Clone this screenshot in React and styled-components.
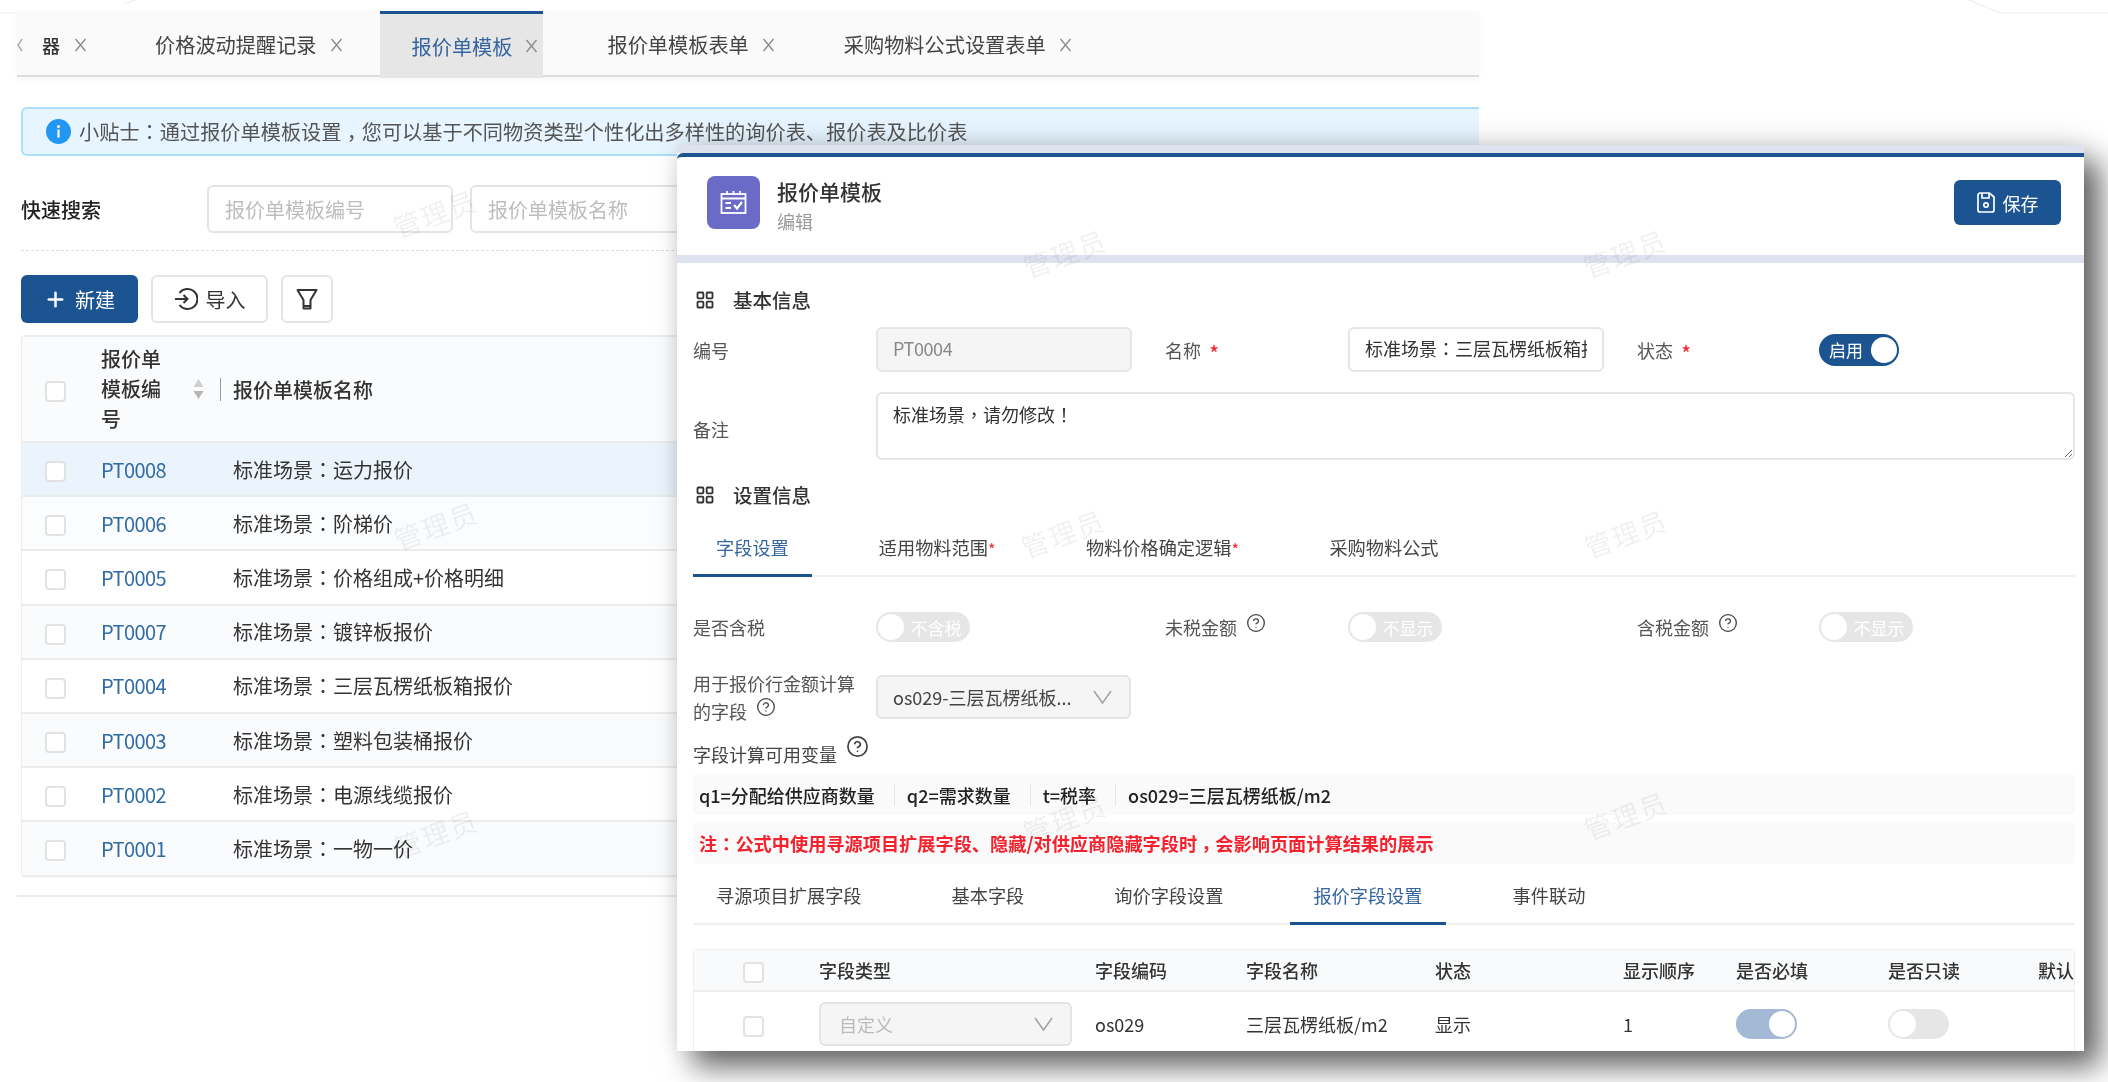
import React from "react";
import styled, { createGlobalStyle } from "styled-components";
import { CircleHelp, LayoutGrid, Plus } from "lucide-react";

const BLUE = "#1c5492";

const GlobalStyle = createGlobalStyle`
  html, body {
    margin: 0;
    padding: 0;
    background: #fff;
  }
  body {
    font-family: "Noto Sans CJK SC", "Liberation Sans", sans-serif;
    color: #333;
  }
  * {
    box-sizing: border-box;
  }
`;

const Page = styled.div`
  position: relative;
  width: 2108px;
  height: 1082px;
  overflow: hidden;
  background: #fff;
  filter: blur(0.35px);
`;

const Decoration = styled.svg`
  position: absolute;
  top: 0;
  left: 0;
`;

// the reference centres full-width punctuation in its cell
const Punct = styled.span`
  font-family: "Noto Sans CJK TC", sans-serif;
`;

const Comma = styled(Punct)`
  display: inline-block;
  transform: translateY(0.28em);
`;

const ListPanel = styled.section`
  width: 1462px;
  margin-left: 17px;
  padding-top: 11px;
`;

const TabBar = styled.div`
  display: flex;
  height: 66px;
  background: #fafafa;
  border-bottom: 2px solid #dcdcdc;
  box-shadow: 0 3px 6px rgba(0, 0, 0, 0.03);
  font-size: 20.2px;
  color: #444;
`;

const Tab = styled.div`
  display: flex;
  align-items: center;
  gap: 13px;
  height: ${(p) => (p.$active ? "67px" : "64px")};
  padding: 0 5px 0 32px;
  margin-right: 32px;
  background: ${(p) => (p.$active ? "#e6e6e6" : "transparent")};
  border-top: 3px solid ${(p) => (p.$active ? BLUE : "transparent")};
  color: ${(p) => (p.$active ? "#34659f" : "inherit")};
`;

const ClippedTab = styled(Tab)`
  gap: 12px;
  padding: 0 5px 0 0;
  margin-right: 31px;
`;

const ScrollArrow = styled.svg`
  width: 25px;
  margin-right: -12px;
  flex-shrink: 0;
`;

const ClippedLabel = styled.span`
  width: 20px;
  font-size: 18px;
  font-weight: 500;
  color: #333;
`;

const CloseIcon = styled.svg`
  width: 13px;
  height: 14px;
  flex-shrink: 0;
`;

const PanelBody = styled.div`
  padding-left: 4px;
`;

const Tip = styled.div`
  display: flex;
  align-items: center;
  gap: 8px;
  height: 49px;
  margin-top: 30px;
  padding-left: 23px;
  background: #e6f5ff;
  border: 2px solid #abdffc;
  border-right: none;
  border-radius: 6px 0 0 6px;
  font-size: 20.2px;
  color: #555;
`;

const SearchRow = styled.div`
  display: flex;
  align-items: center;
  gap: 17px;
  margin-top: 29px;
  padding-bottom: 17px;
  border-bottom: 1px dashed #ddd;
`;

const SearchLabel = styled.span`
  width: 169px;
  font-size: 20px;
  font-weight: 500;
  color: #222;
`;

const SearchInput = styled.input`
  width: 246px;
  height: 48px;
  padding: 0 16px;
  border: 2px solid #e4e4e4;
  border-radius: 6px;
  background: transparent;
  outline: none;
  font: inherit;
  font-size: 20px;
  &::placeholder {
    color: #bdbdbd;
  }
`;

const Toolbar = styled.div`
  display: flex;
  gap: 13px;
  margin-top: 24px;
`;

const ToolButton = styled.button`
  display: flex;
  align-items: center;
  justify-content: center;
  gap: 8px;
  width: ${(p) => p.$width || "117px"};
  height: 48px;
  padding: 0;
  border-radius: 6px;
  border: ${(p) => (p.$primary ? "none" : "2px solid #e4e4e4")};
  background: ${(p) => (p.$primary ? BLUE : "#fff")};
  color: ${(p) => (p.$primary ? "#fff" : "#333")};
  font: inherit;
  font-size: 20px;
`;

const TableWrap = styled.div`
  margin-top: 12px;
  border-left: 1px solid #ececec;
  border-top: 2px solid #eee;
  border-radius: 4px 0 0 4px;
  box-shadow: 0 1px 2px rgba(0, 0, 0, 0.04);
`;

const ListRow = styled.div`
  display: grid;
  grid-template-columns: 79px 132px 1fr;
  align-items: center;
  height: ${(p) => (p.$head ? "106px" : "54.2px")};
  background: ${(p) => p.$bg || "#fff"};
  border-bottom: 2px solid #ececec;
  font-size: 20px;
`;

const Check = styled.span`
  display: block;
  width: 21px;
  height: 21px;
  margin-top: 5px;
  margin-left: ${(p) => p.$offset || "23px"};
  background: #fff;
  border: 2px solid #e2e2e2;
  border-radius: 4px;
`;

const CodeHead = styled.div`
  display: flex;
  align-items: center;
`;

const HeadLabel = styled.span`
  width: 60px;
  line-height: 30px;
  font-weight: 500;
  color: #333;
`;

const SortIcon = styled.svg`
  margin-left: 32px;
`;

const HeadDivider = styled.span`
  width: 1px;
  height: 23px;
  margin-left: 16px;
  background: #999;
`;

const HeadName = styled.span`
  font-weight: 500;
  color: #333;
`;

const CodeLink = styled.a`
  letter-spacing: -0.6px;
  color: #2f6ba5;
`;

const ListFoot = styled.div`
  height: 2px;
  margin: 18px 0 0 -4px;
  background: #ececec;
`;

const Modal = styled.section`
  position: absolute;
  left: 677px;
  top: 145px;
  width: 1407px;
  height: 906px;
  overflow: hidden;
  background: #fff;
  box-shadow: 0 -6px 24px rgba(0, 0, 0, 0.09), 16px 16px 28px rgba(0, 0, 0, 0.6);
`;

const ModalBand = styled.div`
  height: 8px;
  background: #dde2ee;
`;

const ModalHead = styled.header`
  display: flex;
  align-items: flex-start;
  height: 102px;
  padding: 19px 23px 0 30px;
  border-top: 4px solid ${BLUE};
  border-top-left-radius: 6px;
`;

const AppIcon = styled.div`
  display: flex;
  align-items: center;
  justify-content: center;
  width: 53px;
  height: 53px;
  border-radius: 8px;
  background: #6a6bc6;
`;

const TitleBlock = styled.div`
  flex: 1;
  margin-left: 17px;
`;

const Title = styled.div`
  font-size: 21px;
  line-height: 30px;
  font-weight: 500;
  color: #333;
`;

const SubTitle = styled.div`
  font-size: 18px;
  line-height: 30px;
  color: #999;
`;

const SaveButton = styled.button`
  display: flex;
  align-items: center;
  justify-content: center;
  gap: 8px;
  width: 107px;
  height: 45px;
  margin-top: 4px;
  padding: 0;
  border: none;
  border-radius: 6px;
  background: ${BLUE};
  color: #fff;
  font: inherit;
  font-size: 18px;
`;

const ModalBody = styled.div`
  padding: 0 9px 0 16px;
  font-size: 18px;
  color: #555;
`;

const SectionHead = styled.div`
  display: flex;
  align-items: center;
  gap: 18px;
  height: 30px;
  margin-top: ${(p) => p.$top};
  padding: 0 0 3px 2px;
  font-size: 19.5px;
  font-weight: 500;
  color: #333;
`;

const FormGrid = styled.div`
  display: grid;
  grid-template-columns: 183px 289px 183px 289px 182px 1fr;
  align-items: center;
  margin-top: ${(p) => p.$top};
`;

const FieldLabel = styled.div`
  line-height: 28px;
  padding-top: ${(p) => p.$drop || "0"};
`;

const Star = styled.span`
  margin-left: 8px;
  font-size: 22px;
  line-height: 1;
  vertical-align: -4px;
  color: #f5222d;
`;

const HelpMark = styled(CircleHelp)`
  margin-left: ${(p) => p.$gap || "9px"};
  vertical-align: ${(p) => p.$lift || "2px"};
  color: #444;
`;

const TextBox = styled.div`
  width: 256px;
  height: 45px;
  padding: 0 15px;
  line-height: 39px;
  border: 2px solid #e6e6e6;
  border-radius: 6px;
  background: ${(p) => (p.$disabled ? "#f5f5f5" : "#fff")};
  color: ${(p) => (p.$disabled ? "#888" : "#333")};
  letter-spacing: ${(p) => (p.$disabled ? "-0.4px" : "0")};
`;

const BoxText = styled.span`
  display: block;
  overflow: hidden;
  white-space: nowrap;
`;

const Remark = styled.textarea`
  grid-column: 2 / -1;
  display: block;
  width: 100%;
  height: 68px;
  padding: 7px 15px;
  border: 2px solid #e6e6e6;
  border-radius: 6px;
  outline: none;
  color: #333;
  font-family: "Noto Sans CJK TC", sans-serif;
  font-size: 18px;
`;

const Switch = styled.div`
  display: flex;
  flex-direction: ${(p) => (p.$on ? "row" : "row-reverse")};
  align-items: center;
  width: ${(p) => p.$width};
  height: ${(p) => (p.$on && p.$strong ? "32px" : "30px")};
  padding: 0 2px;
  border-radius: 16px;
  background: ${(p) => (p.$on ? (p.$strong ? BLUE : "#a3b9d6") : "#e6e6e6")};
  color: #fff;
  font-size: 17px;
`;

const SwitchText = styled.span`
  flex: 1;
  text-align: center;
`;

const Knob = styled.span`
  width: 26px;
  height: 26px;
  border-radius: 50%;
  background: #fff;
`;

const SelectBox = styled.div`
  display: flex;
  align-items: center;
  justify-content: space-between;
  width: ${(p) => p.$width};
  height: 44px;
  padding: 0 17px 0 ${(p) => p.$pad || "15px"};
  border: 2px solid #e4e4e4;
  border-radius: 6px;
  background: #f5f5f5;
  color: ${(p) => (p.$muted ? "#bbb" : "#444")};
  white-space: nowrap;
`;

const VarTitle = styled.div`
  margin-top: 10px;
  line-height: 28px;
  color: #444;
`;

const InfoBar = styled.div`
  display: flex;
  align-items: center;
  height: ${(p) => p.$height};
  margin-top: ${(p) => p.$top};
  padding-left: 6px;
  background: #fafafa;
  border-radius: 4px;
  font-weight: 500;
`;

const VarItem = styled.span`
  padding-right: 19px;
  margin-right: 12px;
  border-right: 1px solid #e6e6e6;
  line-height: 22px;
  color: #222;
  &:last-child {
    border-right: none;
  }
`;

const Warning = styled.span`
  font-size: 18.2px;
  font-weight: 700;
  color: #f5222d;
`;

const TabStrip = styled.div`
  display: flex;
  gap: 44px;
  height: 60px;
  margin-top: ${(p) => p.$top || "0"};
  border-bottom: 2px solid #f0f0f0;
`;

const StripTab = styled.div`
  display: flex;
  align-items: center;
  height: 60px;
  padding: 3px 23px 0;
  border-bottom: 3px solid ${(p) => (p.$active ? BLUE : "transparent")};
  font-size: 18.2px;
  color: ${(p) => (p.$active ? "#34659f" : "#444")};
`;

const TabStar = styled.span`
  align-self: flex-start;
  margin-top: 17px;
  width: 8px;
  font-size: 16px;
  color: #f5222d;
`;

const FieldTable = styled.div`
  margin-top: 24px;
  border-top: 1px solid #eee;
  border-right: 1px solid #eee;
  border-left: 1px solid #eee;
  border-radius: 4px 4px 0 0;
  color: #333;
`;

const FieldRow = styled.div`
  display: grid;
  grid-template-columns: 125px 276px 151px 189px 188px 113px 152px 150px 36px;
  align-items: center;
  height: ${(p) => (p.$head ? "42px" : "64px")};
  background: ${(p) => (p.$head ? "#f9fafb" : "#fff")};
  border-bottom: ${(p) => (p.$head ? "2px solid #eee" : "none")};
  font-weight: ${(p) => (p.$head ? 500 : 400)};
`;

const Watermark = styled.div`
  position: absolute;
  left: ${(p) => p.$x}px;
  top: ${(p) => p.$y}px;
  transform: translate(-50%, -50%) rotate(-20deg);
  font-size: 27px;
  letter-spacing: 2px;
  color: rgba(0, 0, 0, 0.06);
  pointer-events: none;
  white-space: nowrap;
`;

const CloseX = () => (
  <CloseIcon viewBox="0 0 13 14">
    <path d="M1.5 1 L11.5 13 M11.5 1 L1.5 13" stroke="#8c8c8c" strokeWidth="1.4" fill="none" />
  </CloseIcon>
);

const InfoIcon = () => (
  <svg width="25" height="25" viewBox="0 0 25 25">
    <circle cx="12.5" cy="12.5" r="12.5" fill="#2196f3" />
    <circle cx="12.5" cy="7.5" r="1.5" fill="#fff" />
    <rect x="11.4" y="10.5" width="2.2" height="8" fill="#fff" />
  </svg>
);

const ImportIcon = () => (
  <svg width="24" height="24" viewBox="0 0 24 24" fill="none" stroke="#333" strokeWidth="2">
    <path d="M5.5 6 A10 10 0 1 1 5.5 18" />
    <path d="M1 12 H13 M9.5 8 L13.5 12 L9.5 16" />
  </svg>
);

const FunnelIcon = () => (
  <svg width="22" height="22" viewBox="0 0 22 22" fill="none" stroke="#333" strokeWidth="2">
    <path d="M1.5 2 H20.5 L14.5 12 V20.5 H7.5 V12 Z" strokeLinejoin="round" />
    <path d="M7.5 18 H14.5" />
  </svg>
);

const CalendarIcon = () => (
  <svg width="27" height="25" viewBox="0 0 27 25" fill="none" stroke="#fff" strokeWidth="1.8">
    <rect x="1.5" y="4" width="24" height="19" />
    <path d="M1.5 8.5 H25.5 M7 1 V5 M13.5 1 V5 M20 1 V5" />
    <path d="M5.5 13 H11 M5.5 18 H11" />
    <path d="M14 15 L17 18.5 L22 12" strokeWidth="2.2" />
  </svg>
);

const SaveIcon = () => (
  <svg width="18" height="21" viewBox="0 0 18 21" fill="none" stroke="#fff" strokeWidth="1.7">
    <path d="M2.5 1 H12.5 L17 5 V18 A2 2 0 0 1 15 20 H3 A2 2 0 0 1 1 18 V2.5 Z" />
    <path d="M5 1 V6 H12 V1" />
    <circle cx="9" cy="13" r="2.2" />
  </svg>
);

const Chevron = () => (
  <svg width="19" height="14" viewBox="0 0 19 14" fill="none" stroke="#a0a0a0" strokeWidth="1.5">
    <path d="M1 1 L9.5 13 L18 1" />
  </svg>
);

const LIST_ROWS = [
  ["PT0008", "运力报价", "#ebf3fd"],
  ["PT0006", "阶梯价", "#fbfcfd"],
  ["PT0005", "价格组成+价格明细", "#fff"],
  ["PT0007", "镀锌板报价", "#fafbfd"],
  ["PT0004", "三层瓦楞纸板箱报价", "#fff"],
  ["PT0003", "塑料包装桶报价", "#fafbfd"],
  ["PT0002", "电源线缆报价", "#fff"],
  ["PT0001", "一物一价", "#fafbfd"],
];

const WATERMARKS = [
  [435, 213],
  [436, 525],
  [436, 833],
  [1065, 253],
  [1625, 253],
  [1063, 533],
  [1626, 533],
  [1065, 818],
  [1626, 815],
];

export default function App() {
  return (
    <Page>
      <GlobalStyle />
      <Decoration width="2108" height="20" viewBox="0 0 2108 20" fill="none" stroke="#ececec">
        <path d="M0 13 H17 M125 4 L135 0 M1969 0 L2000 13 H2108" />
      </Decoration>

      <ListPanel>
        <TabBar>
          <ClippedTab>
            <ScrollArrow height="14" viewBox="0 0 25 14">
              <path d="M5 1 L1 7 L5 13" stroke="#aaa" strokeWidth="1.4" fill="none" />
            </ScrollArrow>
            <ClippedLabel>器</ClippedLabel>
            <CloseX />
          </ClippedTab>
          <Tab>
            价格波动提醒记录
            <CloseX />
          </Tab>
          <Tab $active>
            报价单模板
            <CloseX />
          </Tab>
          <Tab>
            报价单模板表单
            <CloseX />
          </Tab>
          <Tab>
            采购物料公式设置表单
            <CloseX />
          </Tab>
        </TabBar>

        <PanelBody>
          <Tip>
            <InfoIcon />
            <span>
              小贴士<Punct>：</Punct>通过报价单模板设置<Comma>，</Comma>
              您可以基于不同物资类型个性化出多样性的询价表、报价表及比价表
            </span>
          </Tip>

          <SearchRow>
            <SearchLabel>快速搜索</SearchLabel>
            <SearchInput placeholder="报价单模板编号" />
            <SearchInput placeholder="报价单模板名称" />
          </SearchRow>

          <Toolbar>
            <ToolButton $primary>
              <Plus size={23} strokeWidth={2.6} />
              新建
            </ToolButton>
            <ToolButton>
              <ImportIcon />
              导入
            </ToolButton>
            <ToolButton $width="52px">
              <FunnelIcon />
            </ToolButton>
          </Toolbar>

          <TableWrap>
            <ListRow $head $bg="#fafbfc">
              <Check />
              <CodeHead>
                <HeadLabel>报价单模板编号</HeadLabel>
                <SortIcon width="11" height="24" viewBox="0 0 11 24">
                  <path d="M5.5 2 L10.5 10 H0.5 Z" fill="#cfcfcf" />
                  <path d="M5.5 22 L10.5 14 H0.5 Z" fill="#b5b5b5" />
                </SortIcon>
                <HeadDivider />
              </CodeHead>
              <HeadName>报价单模板名称</HeadName>
            </ListRow>
            {LIST_ROWS.map(([code, name, bg]) => (
              <ListRow key={code} $bg={bg}>
                <Check />
                <CodeLink>{code}</CodeLink>
                <span>
                  标准场景<Punct>：</Punct>
                  {name}
                </span>
              </ListRow>
            ))}
          </TableWrap>
          <ListFoot />
        </PanelBody>
      </ListPanel>

      <Modal>
        <ModalBand />
        <ModalHead>
          <AppIcon>
            <CalendarIcon />
          </AppIcon>
          <TitleBlock>
            <Title>报价单模板</Title>
            <SubTitle>编辑</SubTitle>
          </TitleBlock>
          <SaveButton>
            <SaveIcon />
            保存
          </SaveButton>
        </ModalHead>
        <ModalBand />

        <ModalBody>
          <SectionHead $top="23px">
            <LayoutGrid size={20} strokeWidth={2.2} />
            基本信息
          </SectionHead>
          <FormGrid $top="11px">
            <FieldLabel>编号</FieldLabel>
            <TextBox $disabled>
              <BoxText>PT0004</BoxText>
            </TextBox>
            <FieldLabel>
              名称<Star>*</Star>
            </FieldLabel>
            <TextBox>
              <BoxText>
                标准场景<Punct>：</Punct>三层瓦楞纸板箱报价
              </BoxText>
            </TextBox>
            <FieldLabel>
              状态<Star>*</Star>
            </FieldLabel>
            <Switch $on $strong $width="80px">
              <SwitchText>启用</SwitchText>
              <Knob />
            </Switch>
          </FormGrid>
          <FormGrid $top="20px">
            <FieldLabel $drop="5px">备注</FieldLabel>
            <Remark value="标准场景，请勿修改！" readOnly />
          </FormGrid>

          <SectionHead $top="21px">
            <LayoutGrid size={20} strokeWidth={2.2} />
            设置信息
          </SectionHead>
          <TabStrip $top="6px">
            <StripTab $active>字段设置</StripTab>
            <StripTab>
              适用物料范围<TabStar>*</TabStar>
            </StripTab>
            <StripTab>
              物料价格确定逻辑<TabStar>*</TabStar>
            </StripTab>
            <StripTab>采购物料公式</StripTab>
          </TabStrip>

          <FormGrid $top="35px">
            <FieldLabel>是否含税</FieldLabel>
            <Switch $width="94px">
              <SwitchText>不含税</SwitchText>
              <Knob />
            </Switch>
            <FieldLabel>
              未税金额
              <HelpMark size={20} strokeWidth={1.6} />
            </FieldLabel>
            <Switch $width="94px">
              <SwitchText>不显示</SwitchText>
              <Knob />
            </Switch>
            <FieldLabel>
              含税金额
              <HelpMark size={20} strokeWidth={1.6} />
            </FieldLabel>
            <Switch $width="94px">
              <SwitchText>不显示</SwitchText>
              <Knob />
            </Switch>
          </FormGrid>
          <FormGrid $top="27px">
            <FieldLabel>
              用于报价行金额计算
              <br />
              的字段
              <HelpMark size={20} strokeWidth={1.6} />
            </FieldLabel>
            <SelectBox $width="255px">
              os029-三层瓦楞纸板...
              <Chevron />
            </SelectBox>
          </FormGrid>

          <VarTitle>
            字段计算可用变量
            <HelpMark size={23} strokeWidth={1.8} $lift="4px" />
          </VarTitle>
          <InfoBar $height="41px" $top="6px">
            <VarItem>q1=分配给供应商数量</VarItem>
            <VarItem>q2=需求数量</VarItem>
            <VarItem>t=税率</VarItem>
            <VarItem>os029=三层瓦楞纸板/m2</VarItem>
          </InfoBar>
          <InfoBar $height="42px" $top="7px">
            <Warning>
              注<Punct>：</Punct>公式中使用寻源项目扩展字段、隐藏/对供应商隐藏字段时<Comma>，</Comma>
              会影响页面计算结果的展示
            </Warning>
          </InfoBar>

          <TabStrip $top="1px">
            <StripTab>寻源项目扩展字段</StripTab>
            <StripTab>基本字段</StripTab>
            <StripTab>询价字段设置</StripTab>
            <StripTab $active>报价字段设置</StripTab>
            <StripTab>事件联动</StripTab>
          </TabStrip>

          <FieldTable>
            <FieldRow $head>
              <Check $offset="49px" />
              <span>字段类型</span>
              <span>字段编码</span>
              <span>字段名称</span>
              <span>状态</span>
              <span>显示顺序</span>
              <span>是否必填</span>
              <span>是否只读</span>
              <span>默认</span>
            </FieldRow>
            <FieldRow>
              <Check $offset="49px" />
              <SelectBox $width="253px" $pad="18px" $muted>
                自定义
                <Chevron />
              </SelectBox>
              <span>os029</span>
              <span>三层瓦楞纸板/m2</span>
              <span>显示</span>
              <span>1</span>
              <Switch $on $width="61px">
                <SwitchText />
                <Knob />
              </Switch>
              <Switch $width="61px">
                <SwitchText />
                <Knob />
              </Switch>
              <span />
            </FieldRow>
          </FieldTable>
        </ModalBody>
      </Modal>

      {WATERMARKS.map(([x, y]) => (
        <Watermark key={`${x}-${y}`} $x={x} $y={y}>
          管理员
        </Watermark>
      ))}
    </Page>
  );
}
